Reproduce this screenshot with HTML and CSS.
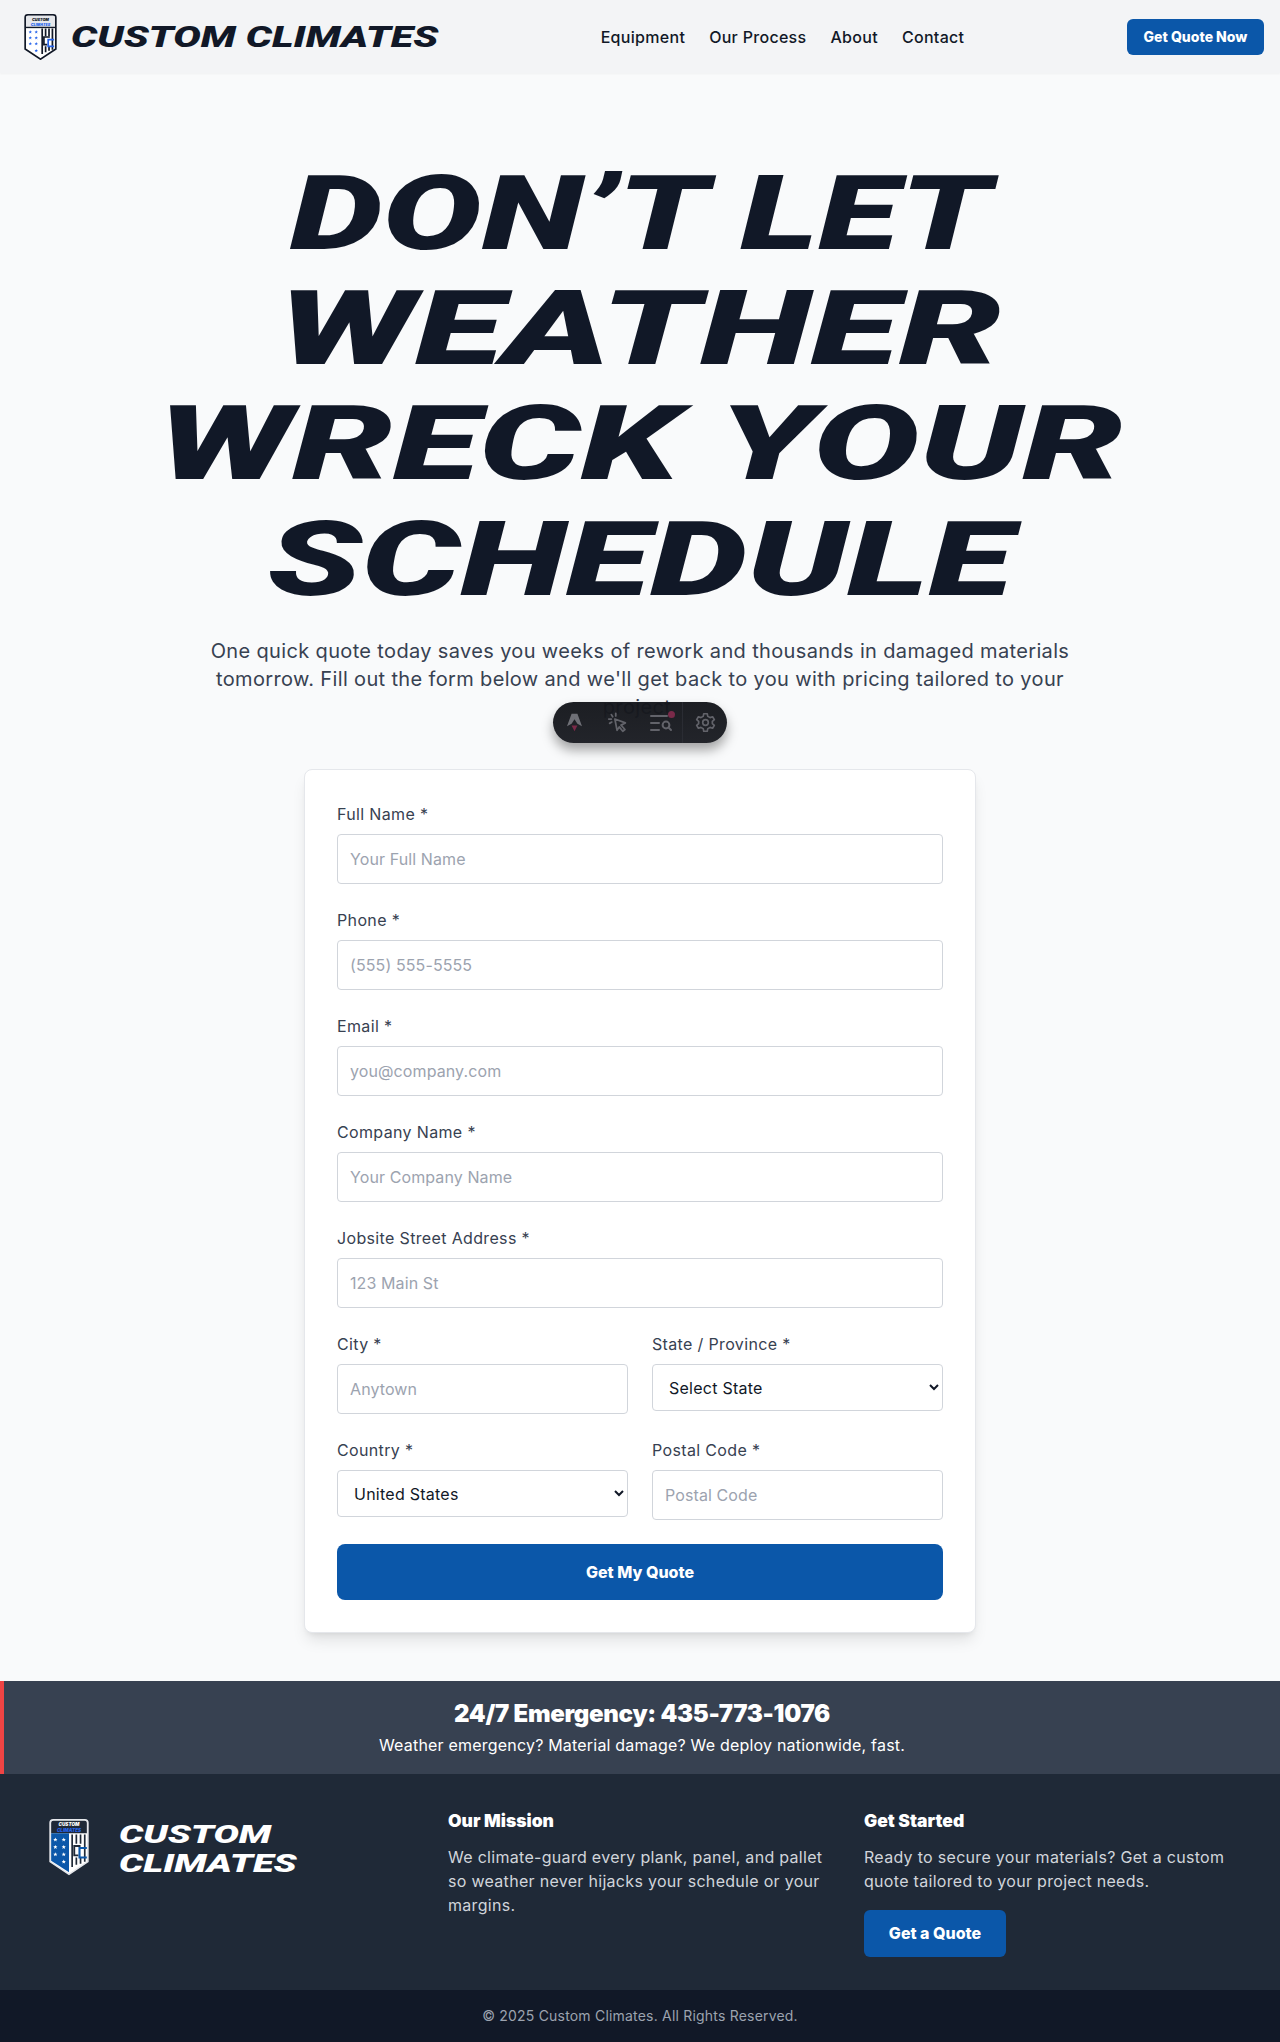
FILE: index.html
```html
<!DOCTYPE html>
<html lang="en">
<head>
  <meta charset="utf-8">
  <title>Custom Climates - Get a Quote</title>
  <link rel="stylesheet" href="styles.css">
</head>
<body>
  <svg class="defs" width="0" height="0">
    <defs>
      <polygon id="star" points="0,-2 .6,-.6 2,-.6 .9,.3 1.3,1.8 0,.9 -1.3,1.8 -.9,.3 -2,-.6 -.6,-.6"/>
    </defs>
  </svg>

  <header class="site-header">
    <a class="logo" href="#">
      <svg class="shield" viewBox="0 0 40 54">
        <path d="M5 1H35Q38 1 38 4V41L20 53L2 41V4Q2 1 5 1Z" fill="#fff" stroke="#111827" stroke-width="2"/>
        <path d="M3 4Q3 2 5 2H35Q37 2 37 4V16H3Z" fill="#e5e7eb"/>
        <rect x="3" y="15" width="34" height="1.6" fill="#111827"/>
        <text x="20" y="8" class="shield-text">CUSTOM</text>
        <text x="20" y="13.5" class="shield-text shield-text-blue">CLIMATES</text>
        <use href="#star" x="8" y="21" fill="#2563eb"/><use href="#star" x="15" y="21" fill="#2563eb"/>
        <use href="#star" x="8" y="28" fill="#2563eb"/><use href="#star" x="15" y="28" fill="#2563eb"/>
        <use href="#star" x="8" y="35" fill="#2563eb"/><use href="#star" x="15" y="35" fill="#2563eb"/>
        <use href="#star" x="15" y="43" fill="#2563eb"/>
        <path d="M22 17V47M26 17V26M30 17V26M34 17V42M26 38V45M30 38V43" stroke="#111827" stroke-width="2"/>
        <path d="M31 27H24V36H28" fill="none" stroke="#111827" stroke-width="2"/>
        <path d="M36 30H29V38H36" fill="none" stroke="#2563eb" stroke-width="2"/>
      </svg>
      <span class="wordmark">CUSTOM CLIMATES</span>
    </a>
    <nav class="main-nav">
      <a href="#">Equipment</a>
      <a href="#">Our Process</a>
      <a href="#">About</a>
      <a href="#">Contact</a>
    </nav>
    <a class="btn btn-header" href="#">Get Quote Now</a>
  </header>

  <main class="hero">
    <h1 class="hero-title">
      <span class="line-1">DON’T LET</span>
      <span class="line-2">WEATHER</span>
      <span class="line-3">WRECK YOUR</span>
      <span class="line-4">SCHEDULE</span>
    </h1>
    <p class="hero-sub">One quick quote today saves you weeks of rework and thousands in damaged materials tomorrow. Fill out the form below and we'll get back to you with pricing tailored to your project.</p>

    <form class="quote-card">
      <div class="field">
        <label for="name">Full Name *</label>
        <input id="name" type="text" placeholder="Your Full Name">
      </div>
      <div class="field">
        <label for="phone">Phone *</label>
        <input id="phone" type="text" placeholder="(555) 555-5555">
      </div>
      <div class="field">
        <label for="email">Email *</label>
        <input id="email" type="text" placeholder="you@company.com">
      </div>
      <div class="field">
        <label for="company">Company Name *</label>
        <input id="company" type="text" placeholder="Your Company Name">
      </div>
      <div class="field">
        <label for="street">Jobsite Street Address *</label>
        <input id="street" type="text" placeholder="123 Main St">
      </div>
      <div class="field-grid">
        <div class="field">
          <label for="city">City *</label>
          <input id="city" type="text" placeholder="Anytown">
        </div>
        <div class="field">
          <label for="state">State / Province *</label>
          <select id="state"><option>Select State</option></select>
        </div>
        <div class="field">
          <label for="country">Country *</label>
          <select id="country"><option>United States</option></select>
        </div>
        <div class="field">
          <label for="postal">Postal Code *</label>
          <input id="postal" type="text" placeholder="Postal Code">
        </div>
      </div>
      <button class="btn btn-submit" type="button">Get My Quote</button>
    </form>
  </main>

  <section class="emergency">
    <h2>24/7 Emergency: 435-773-1076</h2>
    <p>Weather emergency? Material damage? We deploy nationwide, fast.</p>
  </section>

  <footer class="site-footer">
    <div class="footer-main">
      <div class="footer-brand">
        <svg class="shield-footer" viewBox="0 0 40 54">
          <path d="M5 1H35Q38 1 38 4V41L20 53L2 41V4Q2 1 5 1Z" fill="#fff" stroke="#e5e7eb" stroke-width="1.5"/>
          <path d="M3 4Q3 2 5 2H35Q37 2 37 4V14H3Z" fill="#1f2937"/>
          <path d="M3 14H20V51L3 40Z" fill="#0b57a9"/>
          <text x="20" y="7" class="shield-text shield-text-white">CUSTOM</text>
          <text x="20" y="12.5" class="shield-text shield-text-blue">CLIMATES</text>
          <use href="#star" x="7" y="20" fill="#fff"/><use href="#star" x="15" y="20" fill="#fff"/>
          <use href="#star" x="7" y="27" fill="#fff"/><use href="#star" x="15" y="27" fill="#fff"/>
          <use href="#star" x="7" y="34" fill="#fff"/><use href="#star" x="15" y="34" fill="#fff"/>
          <use href="#star" x="15" y="41" fill="#fff"/>
          <path d="M23 15V46M27 15V24M31 15V24M35 15V41M27 37V44M31 37V43" stroke="#1f2937" stroke-width="1.6"/>
          <path d="M31 26H25V35H29" fill="none" stroke="#1f2937" stroke-width="1.8"/>
          <path d="M37 28H30V37H37" fill="none" stroke="#0b57a9" stroke-width="2"/>
        </svg>
        <div class="footer-wordmark"><span>CUSTOM</span><span>CLIMATES</span></div>
      </div>
      <div class="footer-col footer-mission">
        <h3>Our Mission</h3>
        <p>We climate-guard every plank, panel, and pallet so weather never hijacks your schedule or your margins.</p>
      </div>
      <div class="footer-col footer-start">
        <h3>Get Started</h3>
        <p>Ready to secure your materials? Get a custom quote tailored to your project needs.</p>
        <a class="btn btn-footer" href="#">Get a Quote</a>
      </div>
    </div>
    <div class="footer-bottom">© 2025 Custom Climates. All Rights Reserved.</div>
  </footer>

  <div class="dev-toolbar">
    <span class="dev-tool">
      <svg viewBox="0 0 20 24" width="17" height="20">
        <path d="M6.5 1H13.5L19 16L13.5 13L10 7.5L6.5 13L1 16Z" fill="#6f7077"/>
        <path d="M6.5 15H13.5L10 22Z" fill="#7a2a49"/>
      </svg>
    </span>
    <span class="dev-tool">
      <svg viewBox="0 0 24 24" width="21" height="21" fill="none" stroke="#62636a" stroke-width="2" stroke-linejoin="round" stroke-linecap="round">
        <path d="M9 8L21 12.5L16 15L20.5 20L18 22L14 17L11.5 21Z"/>
        <path d="M5 3L6.5 5.5M2 8H5M3 13L5.5 11.5M10 1.5V4.5"/>
      </svg>
    </span>
    <span class="dev-tool dev-tool-audit">
      <svg viewBox="0 0 24 20" width="24" height="20" fill="none" stroke="#62636a" stroke-width="2" stroke-linecap="round">
        <path d="M2 3H18M2 10H10M2 17H10"/>
        <circle cx="17" cy="12" r="3.4"/>
        <path d="M20 15L22 17"/>
      </svg>
      <i class="dev-dot"></i>
    </span>
    <span class="dev-tool dev-tool-gear">
      <svg viewBox="0 0 24 24" width="21" height="21" fill="none" stroke="#62636a" stroke-width="1.9" stroke-linejoin="round">
        <circle cx="12" cy="12" r="3.2"/>
        <path d="M10 2H14L14.6 5L17.2 6.4L20.1 5.4L22.1 8.8L19.8 10.8V13.2L22.1 15.2L20.1 18.6L17.2 17.6L14.6 19L14 22H10L9.4 19L6.8 17.6L3.9 18.6L1.9 15.2L4.2 13.2V10.8L1.9 8.8L3.9 5.4L6.8 6.4L9.4 5Z"/>
      </svg>
    </span>
  </div>
</body>
</html>
```

FILE: styles.css
```css
* {
  box-sizing: border-box;
}
html, body {
  margin: 0;
  padding: 0;
}
body {
  position: relative;
  font-family: "Inter", "Open Sans", sans-serif;
  font-size: 16px;
  line-height: 24px;
  color: #111827;
  background: #f9fafb;
}
a {
  color: inherit;
  text-decoration: none;
}
.defs {
  position: absolute;
}

/* header */
.site-header {
  display: flex;
  align-items: center;
  justify-content: space-between;
  height: 73px;
  padding: 0 16px;
  background: #f3f4f6;
  box-shadow: 0 1px 2px rgba(0, 0, 0, .04);
}
.logo {
  display: flex;
  align-items: center;
  width: 422px;
  padding-left: 7px;
}
.shield {
  width: 35px;
  height: 46px;
  flex: none;
}
.shield-text {
  font-family: "Inter", sans-serif;
  font-size: 4.4px;
  font-weight: 900;
  font-style: italic;
  text-anchor: middle;
  fill: #111827;
}
.shield-text-blue {
  fill: #2563eb;
}
.shield-text-white {
  fill: #fff;
}
.wordmark {
  display: block;
  margin-left: 13px;
  font-family: "Roboto", sans-serif;
  font-size: 30px;
  line-height: 30px;
  font-weight: 900;
  font-style: italic;
  white-space: nowrap;
  color: #111827;
  transform: scaleX(1.37);
  transform-origin: left center;
}
.main-nav {
  display: flex;
  gap: 24px;
  font-weight: 500;
  letter-spacing: .3px;
}
.btn {
  display: block;
  border: 0;
  font-family: inherit;
  font-weight: 800;
  color: #fff;
  text-align: center;
  background: #0b57a9;
}
.btn-header {
  width: 137px;
  height: 36px;
  font-size: 14px;
  line-height: 36px;
  border-radius: 6px;
}

/* hero */
.hero {
  padding: 83px 0 48px;
}
.hero-title {
  margin: 0 0 20px;
  font-family: "Roboto", sans-serif;
  font-size: 104px;
  line-height: 115.2px;
  font-weight: 900;
  font-style: italic;
  text-align: center;
  color: #111827;
}
.hero-title span {
  display: block;
  width: fit-content;
  margin: 0 auto;
  white-space: nowrap;
}
.line-1 {
  transform: scaleX(1.424);
}
.line-2 {
  transform: scaleX(1.56);
}
.line-3 {
  transform: scaleX(1.53);
}
.line-4 {
  transform: scaleX(1.49);
}
.hero-sub {
  width: 896px;
  margin: 0 auto 48px;
  font-size: 20px;
  line-height: 28px;
  letter-spacing: .35px;
  text-align: center;
  color: #374151;
}

/* form */
.quote-card {
  width: 672px;
  margin: 0 auto;
  padding: 32px;
  background: #fff;
  border: 1px solid #e5e7eb;
  border-radius: 8px;
  box-shadow: 0 10px 15px -3px rgba(0, 0, 0, .1), 0 4px 6px -4px rgba(0, 0, 0, .1);
}
.field {
  margin-bottom: 24px;
}
.field label {
  display: block;
  margin-bottom: 8px;
  color: #374151;
  letter-spacing: .35px;
}
.field input, .field select {
  display: block;
  width: 100%;
  font-family: inherit;
  font-size: 16px;
  letter-spacing: .1px;
  color: #111827;
  background: #fff;
  border: 1px solid #d1d5db;
  border-radius: 4px;
  padding: 12px;
}
.field input {
  height: 50px;
}
.field select {
  height: 47px;
  letter-spacing: .25px;
}
.field input::placeholder {
  color: #9ca3af;
  opacity: 1;
}
.field-grid {
  display: grid;
  grid-template-columns: 1fr 1fr;
  column-gap: 24px;
}
.btn-submit {
  width: 100%;
  height: 56px;
  font-size: 16px;
  border-radius: 8px;
}

/* emergency strip */
.emergency {
  height: 93px;
  padding-top: 17px;
  text-align: center;
  color: #fff;
  background: #374151;
  border-left: 4px solid #ef4444;
}
.emergency h2 {
  margin: 0 0 3px;
  font-size: 24px;
  line-height: 32px;
  font-weight: 900;
  letter-spacing: -.3px;
}
.emergency p {
  margin: 0;
  letter-spacing: .2px;
}

/* footer */
.site-footer {
  color: #d1d5db;
  background: #1f2937;
}
.footer-main {
  display: flex;
  height: 216px;
  padding: 35px 32px 0 48px;
}
.footer-brand {
  display: flex;
  width: 400px;
  padding-top: 9px;
}
.shield-footer {
  width: 42px;
  height: 58px;
  flex: none;
}
.footer-wordmark {
  display: flex;
  flex-direction: column;
  margin: 2px 0 0 29px;
  font-family: "Roboto", sans-serif;
  font-size: 26px;
  line-height: 29px;
  font-weight: 900;
  font-style: italic;
  color: #fff;
  transform: scaleX(1.46);
  transform-origin: left top;
}
.footer-col h3 {
  margin: 0 0 12px;
  font-size: 17.5px;
  line-height: 24px;
  font-weight: 900;
  color: #fff;
}
.footer-col p {
  margin: 0 0 17px;
  letter-spacing: .3px;
}
.footer-mission {
  width: 416px;
  padding-right: 32px;
}
.footer-start {
  width: 384px;
}
.btn-footer {
  width: 142px;
  height: 47px;
  font-size: 16px;
  line-height: 47px;
  border-radius: 6px;
}
.footer-bottom {
  height: 53px;
  font-size: 14px;
  line-height: 52px;
  letter-spacing: .2px;
  text-align: center;
  color: #9ca3af;
  background: #111827;
}

/* dev toolbar, sits over the hero text */
.dev-toolbar {
  position: absolute;
  left: 553px;
  top: 702px;
  display: flex;
  width: 174px;
  height: 41px;
  border-radius: 21px;
  background: linear-gradient(180deg, rgba(19, 21, 26, .96), rgba(30, 32, 38, .98));
  box-shadow: 0 7px 12px rgba(0, 0, 0, .35);
}
.dev-tool {
  position: relative;
  display: flex;
  flex: 1;
  align-items: center;
  justify-content: center;
}
.dev-tool-audit {
  border-right: 1px solid #2a2c33;
}
.dev-tool-gear {
  flex: none;
  width: 44px;
}
.dev-dot {
  position: absolute;
  top: 9px;
  right: 7px;
  width: 7px;
  height: 7px;
  border-radius: 50%;
  background: #7a2a49;
}
```
